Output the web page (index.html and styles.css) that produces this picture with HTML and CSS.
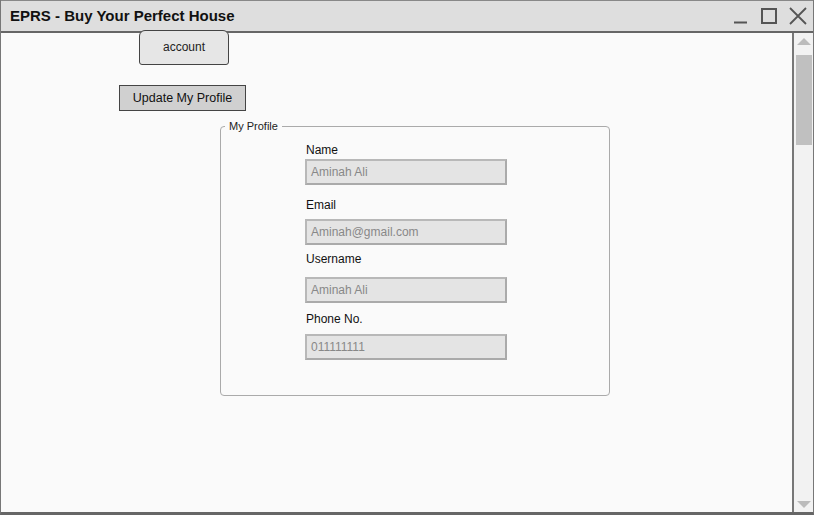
FILE: index.html
```html
<!DOCTYPE html>
<html>
<head>
<meta charset="utf-8">
<link rel="stylesheet" href="styles.css">
</head>
<body>
<div class="window">
  <div class="titlebar">
    <div class="title">EPRS - Buy Your Perfect House</div>
    <div class="controls">
      <svg class="ctl" width="16" height="18" viewBox="0 0 16 18"><path d="M1 15.5H14" stroke="#555" stroke-width="2" fill="none"/></svg>
      <svg class="ctl" width="16" height="18" viewBox="0 0 16 18"><rect x="1" y="2" width="14" height="14" stroke="#555" stroke-width="2" fill="none"/></svg>
      <svg class="ctl" width="18" height="18" viewBox="0 0 18 18"><path d="M1 1L17 17M17 1L1 17" stroke="#555" stroke-width="1.8" fill="none"/></svg>
    </div>
  </div>
  <div class="main">
    <div class="content">
      <div class="tab">account</div>
      <div class="btn">Update My Profile</div>
      <fieldset class="profile">
        <legend>My Profile</legend>
        <div class="fields">
          <div class="label l-name">Name</div>
          <div class="input">Aminah Ali</div>
          <div class="label l-email">Email</div>
          <div class="input">Aminah@gmail.com</div>
          <div class="label l-user">Username</div>
          <div class="input i-user">Aminah Ali</div>
          <div class="label l-phone">Phone No.</div>
          <div class="input i-phone">011111111</div>
        </div>
      </fieldset>
    </div>
    <div class="scrollbar">
      <div class="arrow up"></div>
      <div class="thumb"></div>
      <div class="track"></div>
      <div class="arrow down"></div>
    </div>
  </div>
</div>
</body>
</html>
```
FILE: styles.css
```css
* { box-sizing: border-box; }
html, body { margin: 0; padding: 0; background: #fafafa; }
body { font-family: "Liberation Sans", Arial, sans-serif; }
.window {
  width: 814px; height: 515px;
  border-left: 1px solid #777;
  border-right: 1px solid #777;
  border-bottom: 3px solid #666;
  display: flex; flex-direction: column;
  overflow: hidden;
}
.titlebar {
  height: 33px; flex: none;
  background: #dedede;
  border-top: 1px solid #888;
  border-bottom: 2px solid #666;
  display: flex; align-items: center; justify-content: space-between;
  padding: 0 6px 0 9px;
}
.title { font-weight: bold; font-size: 15px; color: #111; margin-top: -1px; }
.controls { display: flex; align-items: center; gap: 12px; margin-top: -1px; }
.main { flex: 1; display: flex; min-height: 0; }
.content { flex: 1; position: relative; background: #fafafa; }
.tab {
  margin: -3px 0 0 138px;
  width: 90px; height: 35px;
  background: #e6e6e6;
  border: 1px solid #444;
  border-radius: 6px 6px 3px 3px;
  font-size: 12px; color: #222;
  display: flex; align-items: center; justify-content: center;
  padding-bottom: 2px;
  position: relative;
}
.btn {
  margin: 20px 0 0 118px;
  width: 127px; height: 26px;
  background: #d0d0d0;
  border: 1px solid #444;
  font-size: 12.5px; color: #111;
  display: flex; align-items: center; justify-content: center;
}
.profile {
  margin: 9px 0 0 219px;
  width: 390px; height: 276px;
  border: 1px solid #aaa;
  border-radius: 4px;
  padding: 0;
}
.profile legend { font-size: 11px; color: #222; padding: 0 4px; margin-left: 4px; }
.fields { margin-left: 84px; }
.label { font-size: 12px; color: #111; line-height: 16px; height: 16px; padding-left: 1px; }
.l-name { margin-top: 10px; }
.l-email { margin-top: 12px; }
.l-user { margin-top: 6px; }
.l-phone { margin-top: 8px; }
.input {
  width: 202px; height: 26px;
  margin-top: 1px;
  background: #e4e4e4;
  border: 2px solid #aaa;
  border-top-color: #b8b8b8;
  border-left-color: #b8b8b8;
  font-size: 12px; color: #888;
  line-height: 22px; padding-left: 4px;
}
.l-email + .input { margin-top: 6px; }
.i-user { margin-top: 10px; }
.i-phone { margin-top: 7px; }
.scrollbar {
  width: 21px; flex: none;
  border-left: 2px solid #777;
  background: #f2f2f2;
  display: flex; flex-direction: column; align-items: center;
}
.arrow { width: 0; height: 0; border-left: 7px solid transparent; border-right: 7px solid transparent; }
.up { border-bottom: 7px solid #bbb; margin-top: 5px; }
.thumb { width: 16px; height: 90px; background: #c0c0c0; margin-top: 10px; }
.track { flex: 1; }
.down { border-top: 7px solid #bbb; margin-bottom: 4px; }
```
